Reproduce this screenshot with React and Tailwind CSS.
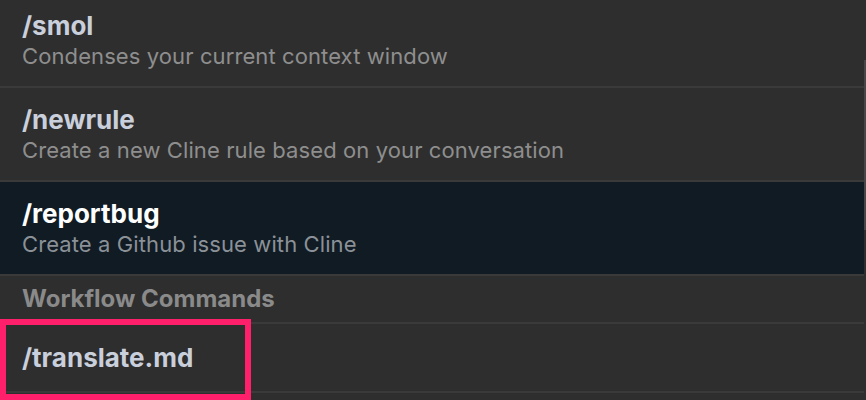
import React from 'react'

const commands = [
  { name: '/smol', desc: 'Condenses your current context window' },
  { name: '/newrule', desc: 'Create a new Cline rule based on your conversation' },
  { name: '/reportbug', desc: 'Create a Github issue with Cline', selected: true },
]

function CommandRow({ name, desc, selected }) {
  return (
    <div
      className={`flex flex-col px-[22px] py-[16px] border-b-2 border-[#3a3a3a] ${
        selected ? 'bg-[#101b24]' : 'bg-[#2e2e2e]'
      }`}
    >
      <span
        className={`text-[26px] leading-[32px] font-bold ${
          selected ? 'text-white' : 'text-[#c9cfdb]'
        }`}
      >
        {name}
      </span>
      <span
        className={`text-[22px] leading-[28px] tracking-[0.1px] ${
          selected ? 'text-[#8b9197]' : 'text-[#8e8e8e]'
        }`}
      >
        {desc}
      </span>
    </div>
  )
}

export default function App() {
  return (
    <div
      className="relative w-[866px] h-[400px] overflow-hidden bg-[#2e2e2e] flex"
      style={{ fontFamily: 'Inter, "Noto Sans", sans-serif' }}
    >
      <div className="flex-1 flex flex-col -mt-[6px]">
        {commands.map((c) => (
          <CommandRow key={c.name} {...c} />
        ))}
        {/* section header */}
        <div className="h-[48px] flex items-center px-[22px] border-b-2 border-[#3a3a3a]">
          <span className="text-[24px] font-bold text-[#8a8a8a]">Workflow Commands</span>
        </div>
        <div className="h-[69px] flex items-center px-[22px] border-b-2 border-[#3a3a3a]">
          <span className="text-[26px] font-bold text-[#c9cfdb]">/translate.md</span>
        </div>
      </div>
      {/* scrollbar */}
      <div className="w-[2px] flex flex-col">
        <div className="h-[60px]" />
        <div className="h-[170px] bg-[#474747]" />
      </div>
      {/* highlight annotation */}
      <div className="absolute left-0 top-[319px] w-[251px] h-[81px] border-[6px] border-[#ff1f6b]" />
    </div>
  )
}
